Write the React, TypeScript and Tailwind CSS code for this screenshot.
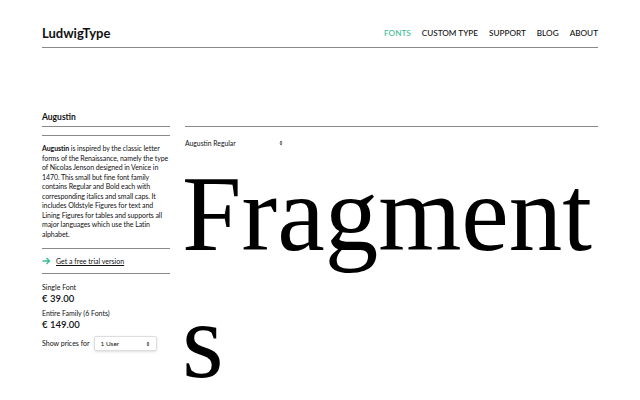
import { useState } from "react";

const ui = { fontFamily: 'Lato, "Open Sans", sans-serif' };

function Arrow() {
  return (
    <svg width="9" height="8" viewBox="0 0 9 8" className="shrink-0">
      <path d="M0.5 4h7M4.5 1l3 3-3 3" fill="none" stroke="#3dbd95" strokeWidth="1.4" />
    </svg>
  );
}

function UpDown() {
  return (
    <svg width="4" height="6" viewBox="0 0 4 6">
      <path d="M0.5 2.5L2 0.8 3.5 2.5zM0.5 3.5L2 5.2 3.5 3.5z" fill="#333" />
    </svg>
  );
}

export default function App() {
  const [users] = useState("1 User");
  const nav = ["CUSTOM TYPE", "SUPPORT", "BLOG", "ABOUT"];

  return (
    <div className="h-[400px] w-[640px] overflow-hidden bg-white text-[#111]" style={ui}>
      <header className="mx-[42px] flex h-[48px] items-center justify-between border-b border-[#8a8a8a] pt-[20px]">
        <div className="text-[13px] font-bold">LudwigType</div>
        <nav className="flex gap-[11px] text-[8.2px] font-medium">
          <span className="text-[#3dbd95]">FONTS</span>
          {nav.map((n) => (
            <span key={n}>{n}</span>
          ))}
        </nav>
      </header>

      <div className="mx-[42px] mt-[60px] flex gap-[15px]">
        {/* sidebar */}
        <aside className="w-[128px] shrink-0">
          <div className="flex h-[19px] items-center border-b border-[#8a8a8a] text-[8.5px] font-bold">
            Augustin
          </div>
          <div className="mt-[8px] border-t border-[#8a8a8a] pt-[8px] pb-[9px] text-[7px] leading-[9.5px] tracking-[-0.08px]">
            <b>Augustin</b> is inspired by the classic letter forms of the Renaissance, namely the type of
            Nicolas Jenson designed in Venice in 1470. This small but fine font family contains Regular and
            Bold each with corresponding italics and small caps. It includes Oldstyle Figures for text and
            Lining Figures for tables and supports all major languages which use the Latin alphabet.
          </div>
          <div className="flex h-[26px] items-center gap-[5px] border-y border-[#8a8a8a] text-[7px]">
            <Arrow />
            <span className="underline underline-offset-1">Get a free trial version</span>
          </div>
          <div className="pt-[8px] text-[7px] leading-[11px]">
            <div>Single Font</div>
            <div className="text-[9.5px] font-semibold leading-[12px]">€ 39.00</div>
            <div className="mt-[3px]">Entire Family (6 Fonts)</div>
            <div className="text-[9.5px] font-semibold leading-[12px]">€ 149.00</div>
            <div className="mt-[5px] flex items-center gap-[4px]">
              <span>Show prices for</span>
              <div className="flex h-[15px] w-[63px] items-center justify-between rounded-[2px] border border-[#ddd] px-[6px] text-[6.5px] shadow-sm">
                <span>{users}</span>
                <UpDown />
              </div>
            </div>
          </div>
        </aside>

        {/* main */}
        <main className="min-w-0 flex-1">
          <div className="mt-[18px] border-t border-[#8a8a8a]" />
          <div className="mt-[10px] flex h-[12px] w-[98px] items-center justify-between text-[6.8px]">
            <span>Augustin Regular</span>
            <UpDown />
          </div>
          <div
            className="-ml-[3px] mt-[2px] break-all text-[107px] leading-[127px] text-black"
            style={{ fontFamily: '"Liberation Serif", "Times New Roman", serif' }}
          >
            Fragments
          </div>
        </main>
      </div>
    </div>
  );
}
